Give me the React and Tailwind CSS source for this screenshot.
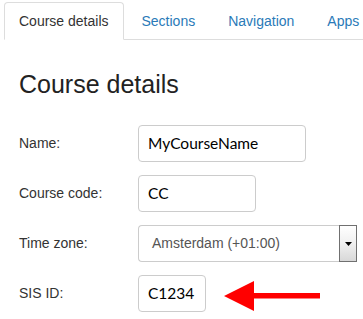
import React from "react";

const tabs = ["Course details", "Sections", "Navigation", "Apps"];

function Field({ label, children }) {
  return (
    <div className="flex items-center h-[37px]">
      <div className="w-[119px] text-[14px] text-[#333]">{label}</div>
      {children}
    </div>
  );
}

function TextBox({ value, width }) {
  return (
    <div
      className={`${width} h-[37px] border border-[#ccc] rounded-[4px] pl-[9px] flex items-center font-['Lato','Open_Sans',sans-serif] text-[15.5px] text-black`}
    >
      {value}
    </div>
  );
}

export default function App() {
  return (
    <div className="w-[363px] h-[319px] bg-white overflow-hidden font-['Liberation_Sans',Arial,sans-serif]">
      <ul className="flex ml-[4px] mt-[2px] border-b border-[#ddd]">
        {tabs.map((t, i) => (
          <li
            key={t}
            className={
              i === 0
                ? "-mb-px mr-[3px] px-[14px] leading-[36px] text-[14px] text-[#333] bg-white border border-[#ddd] border-b-white rounded-t-[4px] whitespace-nowrap"
                : "-mb-px mr-[3px] px-[14px] leading-[36px] text-[14px] text-[#2a7ab8] border border-transparent whitespace-nowrap"
            }
          >
            {t}
          </li>
        ))}
      </ul>

      <div className="pl-[19px]">
        <h2 className="mt-[30px] text-[25px] leading-[28px] text-[#222]">Course details</h2>

        <div className="mt-[27px] flex flex-col gap-[13px]">
          <Field label="Name:">
            <TextBox value="MyCourseName" width="w-[168px]" />
          </Field>
          <Field label="Course code:">
            <TextBox value="CC" width="w-[118px]" />
          </Field>
          <Field label="Time zone:">
            <div className="flex w-[219px] h-[37px]">
              <div className="flex-1 flex items-center pl-[13px] border-y border-l border-[#ccc] rounded-l-[4px] text-[14px] text-[#555]">
                Amsterdam (+01:00)
              </div>
              <div className="w-[18px] h-full flex items-center justify-center border border-[#707070] bg-gradient-to-b from-white via-[#f0f0f0] to-[#d8d8d8]">
                <svg width="7" height="4" viewBox="0 0 7 4">
                  <polygon points="0,0 7,0 3.5,4" fill="#000" />
                </svg>
              </div>
            </div>
          </Field>
          <Field label="SIS ID:">
            <TextBox value="C1234" width="w-[68px]" />
            <svg className="ml-[18px] mt-[4px]" width="96" height="30" viewBox="0 0 96 30">
              <polygon points="0,15 30,0 30,12 96,12 96,17.5 30,17.5 30,30" fill="#ff0000" />
            </svg>
          </Field>
        </div>
      </div>
    </div>
  );
}
